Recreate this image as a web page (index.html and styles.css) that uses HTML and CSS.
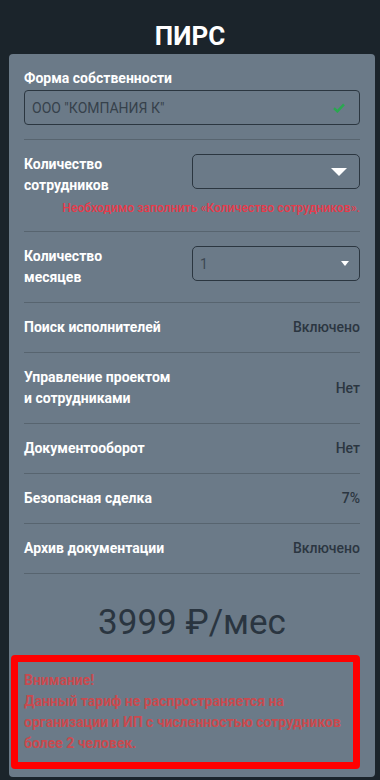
FILE: index.html
```html
<!DOCTYPE html>
<html lang="ru">
<head>
<meta charset="utf-8">
<title>ПИРС</title>
<link rel="stylesheet" href="styles.css">
</head>
<body>
<h1 class="title">ПИРС</h1>
<div class="card">
  <div class="group">
    <div class="label">Форма собственности</div>
    <div class="input">
      <span class="input-text">ООО "КОМПАНИЯ К"</span>
      <svg class="check" width="12" height="10" viewBox="0 0 12 10"><path d="M1 5.2 L4.4 8.4 L11 1.4" fill="none" stroke="#29a84f" stroke-width="2.4"/></svg>
    </div>
  </div>
  <div class="row row-form">
    <div class="pair">
      <div class="label">Количество<br>сотрудников</div>
      <div class="select">
        <span class="select-text"></span>
        <svg class="arrow-big" width="16" height="8" viewBox="0 0 16 8"><path d="M0 0 H16 L8 8 Z" fill="#fff"/></svg>
      </div>
    </div>
    <div class="error">Необходимо заполнить «Количество сотрудников».</div>
  </div>
  <div class="row row-form">
    <div class="pair">
      <div class="label">Количество<br>месяцев</div>
      <div class="select">
        <span class="select-text">1</span>
        <svg class="arrow-small" width="8" height="5" viewBox="0 0 8 5"><path d="M0 0 H8 L4 5 Z" fill="#fff"/></svg>
      </div>
    </div>
  </div>
  <div class="row">
    <div class="label">Поиск исполнителей</div>
    <div class="value">Включено</div>
  </div>
  <div class="row">
    <div class="label">Управление проектом<br>и сотрудниками</div>
    <div class="value">Нет</div>
  </div>
  <div class="row">
    <div class="label">Документооборот</div>
    <div class="value">Нет</div>
  </div>
  <div class="row">
    <div class="label">Безопасная сделка</div>
    <div class="value">7%</div>
  </div>
  <div class="row">
    <div class="label">Архив документации</div>
    <div class="value">Включено</div>
  </div>
  <div class="price">3999 ₽/мес</div>
  <div class="alert">
    Внимание!<br>
    Данный тариф не распространяется на организации и ИП с численностью сотрудников более 2 человек.
  </div>
</div>
</body>
</html>
```

FILE: styles.css
```css
html, body {
  margin: 0;
  padding: 0;
  background: #1b242b;
  font-family: Roboto, "Liberation Sans", sans-serif;
}
.title {
  margin: 0;
  height: 54px;
  box-sizing: border-box;
  padding-top: 19px;
  text-align: center;
  color: #ffffff;
  font-size: 26px;
  font-weight: 700;
  line-height: 34px;
}
.card {
  margin: 0 5px 7px 9px;
  background: #6b7a88;
  border-radius: 4px;
  padding: 14px 15px 8px 15px;
}
.label {
  color: #ffffff;
  font-size: 14px;
  font-weight: 700;
  line-height: 21px;
}
.group {
  padding-bottom: 14px;
  border-bottom: 1px solid #57646f;
}
.input {
  margin-top: 1px;
  height: 35px;
  box-sizing: border-box;
  border: 1px solid #2b3640;
  border-radius: 4px;
  display: flex;
  align-items: center;
  justify-content: space-between;
  padding: 0 14px 0 7px;
}
.input-text {
  color: #36414b;
  font-size: 14px;
}
.check {
  display: block;
}
.row {
  padding: 14px 0;
  border-bottom: 1px solid #57646f;
  display: flex;
  justify-content: space-between;
  align-items: center;
}
.row-form {
  display: block;
}
.pair {
  display: grid;
  grid-template-columns: 1fr 1fr;
  align-items: start;
}
.select {
  height: 35px;
  box-sizing: border-box;
  border: 1px solid #2b3640;
  border-radius: 5px;
  display: flex;
  align-items: center;
  justify-content: space-between;
  padding: 0 11px 0 7px;
}
.select-text {
  color: #3d4853;
  font-size: 14px;
}
.arrow-big { display: block; margin-right: 1px; }
.arrow-small { display: block; margin-right: -1px; }
.error {
  margin-top: 3px;
  text-align: right;
  color: #e63b4b;
  font-size: 12.2px;
  font-weight: 500;
  line-height: 18px;
}
.value {
  color: #2b3641;
  font-size: 14px;
  font-weight: 500;
  line-height: 21px;
  text-align: right;
}
.price {
  text-align: center;
  color: #2a3540;
  font-size: 35px;
  font-weight: 400;
  line-height: 40px;
  padding: 29px 0 12px;
}
.alert {
  margin-left: -13px;
  border: 7px solid #ff0000;
  border-radius: 4px;
  padding: 8px 12px 8px 6px;
  color: #c94a4f;
  font-size: 14px;
  font-weight: 700;
  line-height: 21px;
}
```
